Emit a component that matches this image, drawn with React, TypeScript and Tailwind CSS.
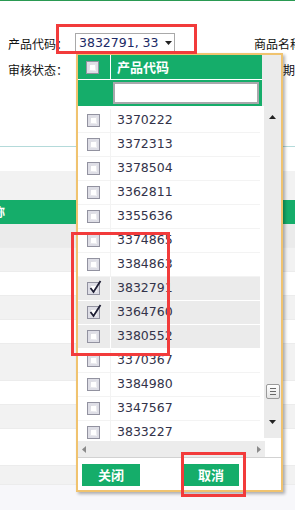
import React from 'react';

const cjk = { fontFamily: '"Noto Sans CJK SC", "Noto Sans", sans-serif' };
const num = { fontFamily: '"DejaVu Sans", "Noto Sans CJK SC", sans-serif' };

const codes = [
  { code: '3370222' },
  { code: '3372313' },
  { code: '3378504' },
  { code: '3362811' },
  { code: '3355636' },
  { code: '3374865' },
  { code: '3384863' },
  { code: '3832791', checked: true, active: true },
  { code: '3364760', checked: true, active: true },
  { code: '3380552', active: true },
  { code: '3370367' },
  { code: '3384980' },
  { code: '3347567' },
  { code: '3833227' },
];

const bgRows = [
  { h: 'h-[24px]', bg: 'bg-[#ebebeb]' },
  { h: 'h-[24px]', bg: 'bg-[#f2f2f2]' },
  { h: 'h-[24px]', bg: 'bg-white' },
  { h: 'h-[24px]', bg: 'bg-[#f2f2f2]' },
  { h: 'h-[24px]', bg: 'bg-white' },
  { h: 'h-[37px]', bg: 'bg-[#f2f2f2]' },
  { h: 'h-[24px]', bg: 'bg-white' },
  { h: 'h-[24px]', bg: 'bg-[#f2f2f2]' },
  { h: 'h-[37px]', bg: 'bg-white' },
  { h: 'h-[19px]', bg: 'bg-[#f2f2f2]' },
  { h: 'h-[30px]', bg: 'bg-[#f7f7fa]' },
];

const Checkbox = ({ checked }: { checked?: boolean }) => (
  <div className="relative w-[13px] h-[13px] border border-[#9292a0] bg-gradient-to-br from-[#d4d4dc] to-[#f8f8fa] shadow-[inset_0_0_0_2px_#dedee6]">
    <div className="absolute inset-[3px] bg-white" />
    {checked && (
      <svg className="absolute left-[1px] top-[-3px]" width="13" height="14" viewBox="0 0 13 14">
        <path d="M1.5 8 L4.5 12 L11.5 1" fill="none" stroke="#1e1e34" strokeWidth="1.8" />
      </svg>
    )}
  </div>
);

const Tri = ({ dir, color = '#222' }: { dir: 'up' | 'down' | 'left' | 'right'; color?: string }) => {
  const pts = {
    up: '0,4 7,4 3.5,0',
    down: '0,0 7,0 3.5,4',
    left: '4,0 4,7 0,3.5',
    right: '0,0 0,7 4,3.5',
  }[dir];
  const vertical = dir === 'up' || dir === 'down';
  return (
    <svg width={vertical ? 7 : 4} height={vertical ? 4 : 7} viewBox={vertical ? '0 0 7 4' : '0 0 4 7'}>
      <polygon points={pts} fill={color} />
    </svg>
  );
};

const App = () => {
  return (
    <div className="relative w-[295px] h-[510px] overflow-hidden bg-white text-[#111]" style={cjk}>
      <div className="h-[1px] bg-[#2a9a52]" />

      {/* filter form */}
      <div className="pt-[32px] pl-2 text-[12px]">
        <div className="flex items-center h-[21px] whitespace-nowrap">
          <span className="w-[67px] shrink-0">产品代码：</span>
          <div className="w-[100px] shrink-0 h-[21px] border border-[#a9a9a9] flex items-center pl-[3px] text-[12.5px] text-[#1c2a66]" style={num}>
            <span>3832791, 33</span>
            <span className="ml-[6px] mb-[1px]">
              <Tri dir="down" />
            </span>
          </div>
          <span className="ml-[79px] shrink-0">商品名称</span>
        </div>
        <div className="flex items-center h-[20px] mt-[6px] whitespace-nowrap">
          <span className="w-[263px] shrink-0">审核状态：</span>
          <span className="shrink-0">日期</span>
        </div>
      </div>

      {/* list behind the popup */}
      <div className="mt-[66px]">
        <div className="h-[1px] bg-[#b4dada]" />
        <div className="h-[24px]" />
        <div className="h-[29px] bg-[#f2f2f2]" />
        <div className="h-[24px] bg-[#15ad6a] flex items-center text-white font-bold text-[12px]">
          <span className="-ml-[7px] whitespace-nowrap">称</span>
        </div>
        {bgRows.map((r, i) => (
          <div key={i} className={`${r.h} ${r.bg} border-b border-[#ececec]`} />
        ))}
      </div>

      {/* dropdown popup */}
      <div className="absolute left-[76px] top-[53px] w-[207px] h-[439px] border-2 border-[#f0c36f] bg-white shadow-[2px_2px_3px_rgba(0,0,0,0.3)] flex flex-col">
        <div className="flex h-[51px]">
          <div className="w-[184px] bg-[#15ad6a] flex flex-col">
            <div className="h-[25px] flex border-b border-white">
              <div className="w-[33px] border-r border-white flex items-center pl-[8px]">
                <Checkbox />
              </div>
              <div className="pl-[6px] flex items-center text-white font-bold text-[13px]">产品代码</div>
            </div>
            <div className="h-[26px] flex items-center">
              <div className="ml-[35px] w-[146px] h-[22px] bg-white border-2 border-[#a8a8ac]" />
            </div>
          </div>
          <div className="flex-1 bg-[#ebebeb]" />
        </div>

        <div className="flex h-[335px]">
          <div className="w-[186px] overflow-hidden pt-[3px]">
            {codes.map((c) => (
              <div
                key={c.code}
                className={`w-[182px] h-[24px] flex border-b ${c.active ? 'bg-[#ebebeb] border-white' : 'bg-white border-[#f3f3f3]'}`}
              >
                <div className={`w-[33px] border-r ${c.active ? 'border-white' : 'border-[#f3f3f3]'} flex items-center pl-[9px]`}>
                  <Checkbox checked={c.checked} />
                </div>
                <div className="pl-[6px] flex items-center text-[12.5px] text-[#33334a]" style={num}>
                  {c.code}
                </div>
              </div>
            ))}
          </div>
          <div className="w-[17px] mb-[3px] bg-[#ebebeb] flex flex-col items-center pt-[9px] pb-[14px]">
            <Tri dir="up" />
            <div className="flex-1" />
            <div className="w-[14px] h-[15px] border border-[#9a9a9a] rounded-[2px] bg-gradient-to-b from-white to-[#e4e4e4] flex flex-col items-center justify-center gap-[2px]">
              <div className="w-[6px] h-[1px] bg-[#6a6a6a]" />
              <div className="w-[6px] h-[1px] bg-[#6a6a6a]" />
              <div className="w-[6px] h-[1px] bg-[#6a6a6a]" />
            </div>
            <div className="h-[21px]" />
            <Tri dir="down" />
          </div>
        </div>

        <div className="flex h-[16px]">
          <div className="w-[187px] bg-[#ececec] flex items-center justify-between px-[4px]">
            <Tri dir="left" color="#8a8a8a" />
            <Tri dir="right" color="#8a8a8a" />
          </div>
          <div className="flex-1 bg-white" />
        </div>

        <div className="flex-1 border-t border-[#d2d2d2] flex items-center pl-[4px] pt-[1px]">
          <button className="w-[58px] h-[22px] bg-[#15ad6a] text-white font-bold text-[13px] flex items-center justify-center">
            关闭
          </button>
          <button className="ml-[43px] w-[56px] h-[22px] bg-[#15ad6a] text-white font-bold text-[13px] flex items-center justify-center">
            取消
          </button>
        </div>
      </div>

      {/* red annotation boxes */}
      <div className="absolute left-[56px] top-[24px] w-[141px] h-[30px] border-[3px] border-[#f23b3b]" />
      <div className="absolute left-[71px] top-[232px] w-[99px] h-[124px] border-[3px] border-[#f23b3b]" />
      <div className="absolute left-[181px] top-[452px] w-[65px] h-[45px] border-[3px] border-[#f23b3b]" />
    </div>
  );
};

export default App;
